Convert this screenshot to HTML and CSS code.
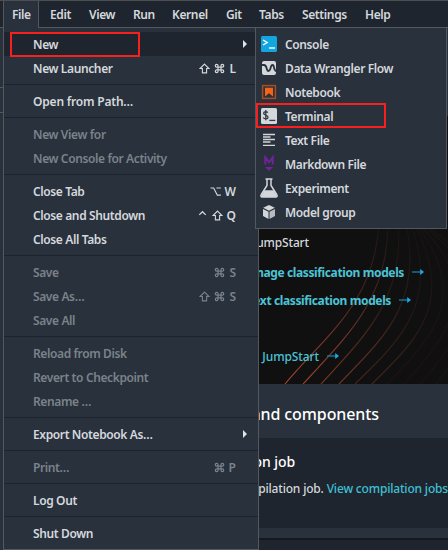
FILE: index.html
```html
<!DOCTYPE html>
<html lang="en">
<head>
<meta charset="utf-8">
<title>Studio</title>
<link rel="stylesheet" href="styles.css">
</head>
<body>
<svg width="0" height="0" class="defs">
  <defs>
    <symbol id="shift" viewBox="0 0 12 12"><path d="M6 1.2 10.8 6H8.3V10.8H3.7V6H1.2Z" fill="none" stroke="currentColor" stroke-width="1.2"/></symbol>
    <symbol id="cmd" viewBox="0 0 12 12"><path d="M4.4 4.4V2.9A1.5 1.5 0 1 0 2.9 4.4H9.1A1.5 1.5 0 1 0 7.6 2.9V9.1A1.5 1.5 0 1 0 9.1 7.6H2.9A1.5 1.5 0 1 0 4.4 9.1Z" fill="none" stroke="currentColor" stroke-width="1.3"/></symbol>
    <symbol id="opt" viewBox="0 0 12 12"><path d="M.5 2.2H4L8 10H11.8M7 2.2H11.8" fill="none" stroke="currentColor" stroke-width="1.3"/></symbol>
    <symbol id="ctrl" viewBox="0 0 12 12"><path d="M2.5 5.3 6 1.9 9.5 5.3" fill="none" stroke="currentColor" stroke-width="1.4"/></symbol>
    <symbol id="arrow" viewBox="0 0 12 8"><path d="M0 4H9" stroke="#147aa5" stroke-width="1.4"/><path d="M8.2 1 12 4 8.2 7Z" fill="#1ba8e4"/></symbol>
  </defs>
</svg>
<div class="app">
  <nav class="menubar">
    <span class="active">File</span><span>Edit</span><span>View</span><span>Run</span><span>Kernel</span><span>Git</span><span>Tabs</span><span>Settings</span><span>Help</span>
  </nav>
  <div class="body">
    <aside class="rail"><i></i><i></i></aside>
    <main class="page">
      <div class="tabstrip"></div>
      <section class="hero">
        <svg class="waves" width="189" height="268" viewBox="259 116 189 268" fill="none">
          <g stroke-width="1.1">
            <path d="M285 384C325 336 374 304 379 224" stroke="url(#g1)"/>
            <path d="M303 384C345 338 388 300 388 224" stroke="url(#g1)"/>
            <path d="M321 384C361 340 405 300 398 224" stroke="url(#g2)"/>
            <path d="M339 384C379 342 424 305 406 224" stroke="url(#g2)"/>
            <path d="M355 384C398 342 440 305 411 224" stroke="url(#g3)"/>
            <path d="M372 384C412 344 458 305 414 224" stroke="url(#g3)"/>
            <path d="M387 384C425 344 475 300 416 224M404 384C440 344 490 290 418 224M420 384C455 344 505 280 420 224M436 384C470 344 505 270 422 224" stroke="#1d1414"/>
          </g>
          <defs>
            <linearGradient id="g1" gradientUnits="userSpaceOnUse" x1="0" y1="384" x2="0" y2="230"><stop stop-color="#a8462a"/><stop offset=".5" stop-color="#54291f"/><stop offset="1" stop-color="#1b1413"/></linearGradient>
            <linearGradient id="g2" gradientUnits="userSpaceOnUse" x1="0" y1="384" x2="0" y2="230"><stop stop-color="#7a3826"/><stop offset=".5" stop-color="#301b18"/><stop offset="1" stop-color="#191313"/></linearGradient>
            <linearGradient id="g3" gradientUnits="userSpaceOnUse" x1="0" y1="384" x2="0" y2="230"><stop stop-color="#4a251e"/><stop offset=".5" stop-color="#201615"/><stop offset="1" stop-color="#171313"/></linearGradient>
          </defs>
        </svg>
        <p class="intro">JumpStart</p>
        <p class="link image"><b>Image classification models</b><svg width="12" height="8"><use href="#arrow"/></svg></p>
        <p class="link text"><b>Text classification models</b><svg width="12" height="8"><use href="#arrow"/></svg></p>
        <p class="link more"><span>JumpStart</span><svg width="12" height="8"><use href="#arrow"/></svg></p>
      </section>
      <h2>and components</h2>
      <section class="job">
        <h3>Compilation job</h3>
        <p><span>compilation job.</span> <a>View compilation jobs</a></p>
      </section>
      <div class="next"></div>
    </main>
  </div>

  <div class="menu file-menu">
    <div class="row on"><span>New</span><i class="tri"></i></div>
    <div class="row"><span>New Launcher</span><kbd><svg><use href="#shift"/></svg><svg><use href="#cmd"/></svg><em>L</em></kbd></div>
    <hr>
    <div class="row"><span class="wide">Open from Path…</span></div>
    <hr>
    <div class="row off"><span>New View for</span></div>
    <div class="row off"><span>New Console for Activity</span></div>
    <hr>
    <div class="row"><span>Close Tab</span><kbd><svg><use href="#opt"/></svg><em>W</em></kbd></div>
    <div class="row"><span>Close and Shutdown</span><kbd><svg><use href="#ctrl"/></svg><svg><use href="#shift"/></svg><em>Q</em></kbd></div>
    <div class="row"><span>Close All Tabs</span></div>
    <hr>
    <div class="row off"><span>Save</span><kbd><svg><use href="#cmd"/></svg><em>S</em></kbd></div>
    <div class="row off"><span>Save As…</span><kbd><svg><use href="#shift"/></svg><svg><use href="#cmd"/></svg><em>S</em></kbd></div>
    <div class="row off"><span>Save All</span></div>
    <hr>
    <div class="row off"><span>Reload from Disk</span></div>
    <div class="row off"><span>Revert to Checkpoint</span></div>
    <div class="row off"><span>Rename …</span></div>
    <hr>
    <div class="row"><span>Export Notebook As…</span><i class="tri"></i></div>
    <hr>
    <div class="row off"><span>Print…</span><kbd><svg><use href="#cmd"/></svg><em>P</em></kbd></div>
    <hr>
    <div class="row"><span>Log Out</span></div>
    <hr>
    <div class="row"><span>Shut Down</span></div>
  </div>

  <div class="menu sub-menu">
    <div class="row"><svg viewBox="0 0 18 18"><rect x="1" y="1" width="16" height="16" rx="1.5" fill="#12a5df"/><path d="M3 5 7.2 7.5 3 10" fill="none" stroke="#fff" stroke-width="1.4"/><path d="M9 13H15" stroke="#fff" stroke-width="1.4"/></svg><span>Console</span></div>
    <div class="row"><svg viewBox="0 0 18 18"><rect x="2" y="2" width="14" height="14" rx="2" fill="#d3d6da"/><path d="M1.5 6H4C7.5 6 5.8 12 8.5 12S10 6 12.5 6C15 6 13 12 16.5 12" fill="none" stroke="#28313c" stroke-width="1.8"/></svg><span>Data Wrangler Flow</span></div>
    <div class="row"><svg viewBox="0 0 18 18"><rect x="2.6" y="2.6" width="12.8" height="12.8" fill="none" stroke="#a74d22" stroke-width="1.5"/><path d="M5 4.8H13V13.4L9 10.2 5 13.4Z" fill="#f26419"/></svg><span>Notebook</span></div>
    <div class="row"><svg viewBox="0 0 18 18"><rect x="1" y="1" width="16" height="16" rx="1.5" fill="#d3d6da"/><path d="M7.8 5.7C6.8 4.3 3.6 4.4 3.6 6.3S8 8 8 10.2 4.4 12.2 3.2 10.7M5.8 3V13.2" fill="none" stroke="#343b44" stroke-width="1.3"/><path d="M9.3 13.4H15.3" stroke="#343b44" stroke-width="1.3"/></svg><span>Terminal</span></div>
    <div class="row"><svg viewBox="0 0 18 18"><path d="M3 3.5H15M3 6H10.5M3 8.5H15M3 11H10.5M3 14.3H15" stroke="#d3d6da" stroke-width="1.3"/></svg><span>Text File</span></div>
    <div class="row"><svg viewBox="0 0 18 18"><path d="M5.3 9.4V2.4L9 7.2 12.7 2.4V9.4" fill="none" stroke="#71249a" stroke-width="2"/><path d="M5 12H13L9 16Z" fill="#71249a"/></svg><span>Markdown File</span></div>
    <div class="row flask"><svg viewBox="0 0 18 20"><path d="M5.5 1H12.5M7 1V7.5L1.3 16.5C.5 18 .8 19 2.2 19H15.8C17.2 19 17.5 18 16.7 16.5L11 7.5V1" fill="none" stroke="#d3d6da" stroke-width="1.5"/><path d="M4.5 12.2H13.5L17 18V19H1V18Z" fill="#d3d6da"/></svg><span>Experiment</span></div>
    <div class="row"><svg viewBox="0 0 18 18"><path d="M9 2 14.8 4.8 9 7.7 3.2 4.8Z" fill="#d3d6da"/><path d="M3 6 8.5 8.8V16L3 13Z" fill="#d3d6da"/><path d="M15 6 9.5 8.8V16L15 13Z" fill="#b6bbc1"/></svg><span>Model group</span></div>
  </div>
  <div class="mark mark-new"></div>
  <div class="mark mark-terminal"></div>
</div>
</body>
</html>
```
FILE: styles.css
```css
* { box-sizing: border-box; }
body { margin: 0; background: #1e252e; font: 600 12px/24px "Noto Sans", "Open Sans", sans-serif; letter-spacing: -.38px; color: #d5d8dc; }
p, h2, h3 { margin: 0; }
.defs { position: absolute; }
.app { position: relative; width: 448px; height: 550px; overflow: hidden; display: flex; flex-direction: column; white-space: nowrap; }

.menubar { height: 28px; flex: none; display: grid; grid-template-columns: 36px 39px 44px 39px 54px 33px 43px 63px 60px; padding-left: 3px; background: #1e252e; border-top: 1px solid #4c4f52; border-bottom: 1px solid #55585b; line-height: 28px; }
.menubar span { padding-left: 11px; }
.menubar .active { height: 27px; padding-left: 8px; background: #28313c; border: solid #55585b; border-width: 0 1px; }

.body { display: flex; flex: 1; min-height: 0; }
.rail { width: 3px; background: #28313c; }
.rail i { display: block; height: 60px; border-bottom: 1px solid #55585b; }
.rail i:nth-child(2) { height: 25px; }
.page { margin-left: 256px; width: 189px; display: flex; flex-direction: column; overflow: hidden; }
.tabstrip { height: 88px; flex: none; background: #28313c; }
.hero { position: relative; height: 268px; flex: none; background: #101011; padding-top: 115px; display: flex; flex-direction: column; align-items: flex-end; }
.waves { position: absolute; left: 0; top: 0; }
.hero p { position: relative; display: flex; align-items: center; justify-content: flex-end; height: 24px; }
.hero .intro { padding-right: 139px; font-weight: 500; letter-spacing: -.15px; }
.link { gap: 8px; color: #4bc3d5; }
.link svg { margin-top: -2px; }
.link b { font-weight: 700; }
.hero .image { margin-top: 6px; padding-right: 24px; }
.hero .text { margin-top: 4px; padding-right: 37px; }
.hero .more { margin-top: 32px; padding-right: 109px; font-weight: 500; letter-spacing: -.1px; }
h2 { height: 54px; flex: none; background: #28313c; color: #fff; font-size: 16px; font-weight: 500; letter-spacing: -.1px; line-height: 60px; padding-right: 69px; display: flex; justify-content: flex-end; }
.job { height: 90px; flex: none; padding-top: 12px; display: flex; flex-direction: column; align-items: flex-end; background: #1e252e; }
.job h3 { color: #fff; font-size: 14px; font-weight: 500; letter-spacing: -.1px; line-height: 24px; padding-right: 153px; }
.job p { line-height: 30px; font-weight: 500; letter-spacing: -.18px; }
.job a { color: #3fc0d4; }
.next { height: 12px; flex: none; background: #28313c; border-bottom: 2px solid #15191e; }

.menu { position: absolute; background: #28313c; border: 1px solid #55585b; padding: 4px 0; }
.file-menu { left: 3px; top: 27px; width: 256px; height: 523px; border-top-color: transparent; background-clip: padding-box; }
.sub-menu { left: 255px; top: 27px; width: 192px; height: 202px; }
.row { height: 24px; display: flex; align-items: center; padding-left: 29px; padding-right: 22px; }
.row span, .row em { line-height: 22px; padding-top: 2px; }
.row .wide { letter-spacing: -.2px; }
.row.on { background: #1e252e; }
.row.off { color: #7c828a; }
hr { margin: 4px 0; border: 0; height: 1px; background: #1c232c; }
kbd { margin-left: auto; display: flex; align-items: center; gap: 4px; font: inherit; }
kbd svg { width: 11px; height: 11px; }
kbd em { font-style: normal; letter-spacing: 0; }
.tri { margin-left: auto; margin-right: -11px; border: solid transparent; border-width: 4px 0 4px 4px; border-left-color: #e0e2e4; }
.sub-menu .row { padding: 0 0 0 4px; gap: 7px; }
.sub-menu svg { width: 18px; height: 18px; flex: none; }
.sub-menu .flask svg { height: 20px; }
.mark { position: absolute; border: 2px solid #f8201c; }
.mark-new { left: 10px; top: 32px; width: 130px; height: 25px; }
.mark-terminal { left: 256px; top: 103px; width: 130px; height: 25px; }
```
